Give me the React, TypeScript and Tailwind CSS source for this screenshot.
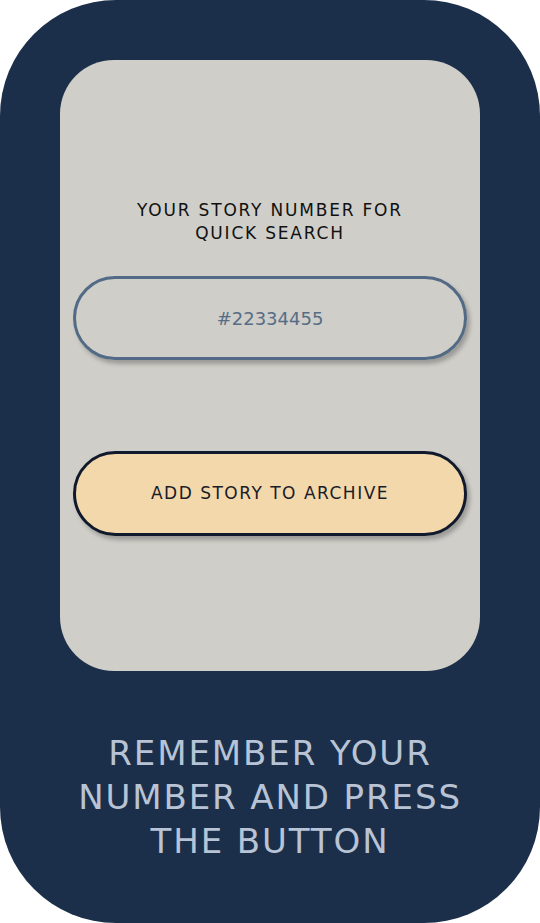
import React from 'react';

const App = () => {
  return (
    <div className="w-[540px] h-[923px] bg-white" style={{ fontFamily: '"DejaVu Sans", "Open Sans", sans-serif' }}>
      <div className="w-full h-full bg-[#1c2f4a] rounded-[116px] pt-[60px] px-[60px] flex flex-col items-center">
        <div className="w-[420px] h-[611px] bg-[#cfcec9] rounded-[54px] flex flex-col items-center pt-[139px] px-[13px]">
          <h2 className="text-[17px] leading-[23px] tracking-[1.8px] text-[#111111] text-center uppercase">
            Your story number for
            <br />
            quick search
          </h2>
          <div className="mt-[31px] w-[394px] h-[84px] rounded-full border-[3px] border-[#526a85] shadow-[3px_4px_4px_rgba(0,0,0,0.25)] flex items-center justify-center">
            <span className="text-[18px] text-[#566d87]">#22334455</span>
          </div>
          <button className="mt-[91px] w-[394px] h-[85px] rounded-full bg-[#f3d8ab] border-[3px] border-[#111a2c] shadow-[3px_4px_4px_rgba(0,0,0,0.25)] flex items-center justify-center">
            <span className="text-[17px] tracking-[1.5px] text-[#1a1c28] uppercase">Add story to archive</span>
          </button>
        </div>
        <p className="mt-[60px] text-[34px] leading-[44px] tracking-[1.9px] text-[#b8c4d5] text-center uppercase">
          Remember your
          <br />
          number and press
          <br />
          the button
        </p>
      </div>
    </div>
  );
};

export default App;
